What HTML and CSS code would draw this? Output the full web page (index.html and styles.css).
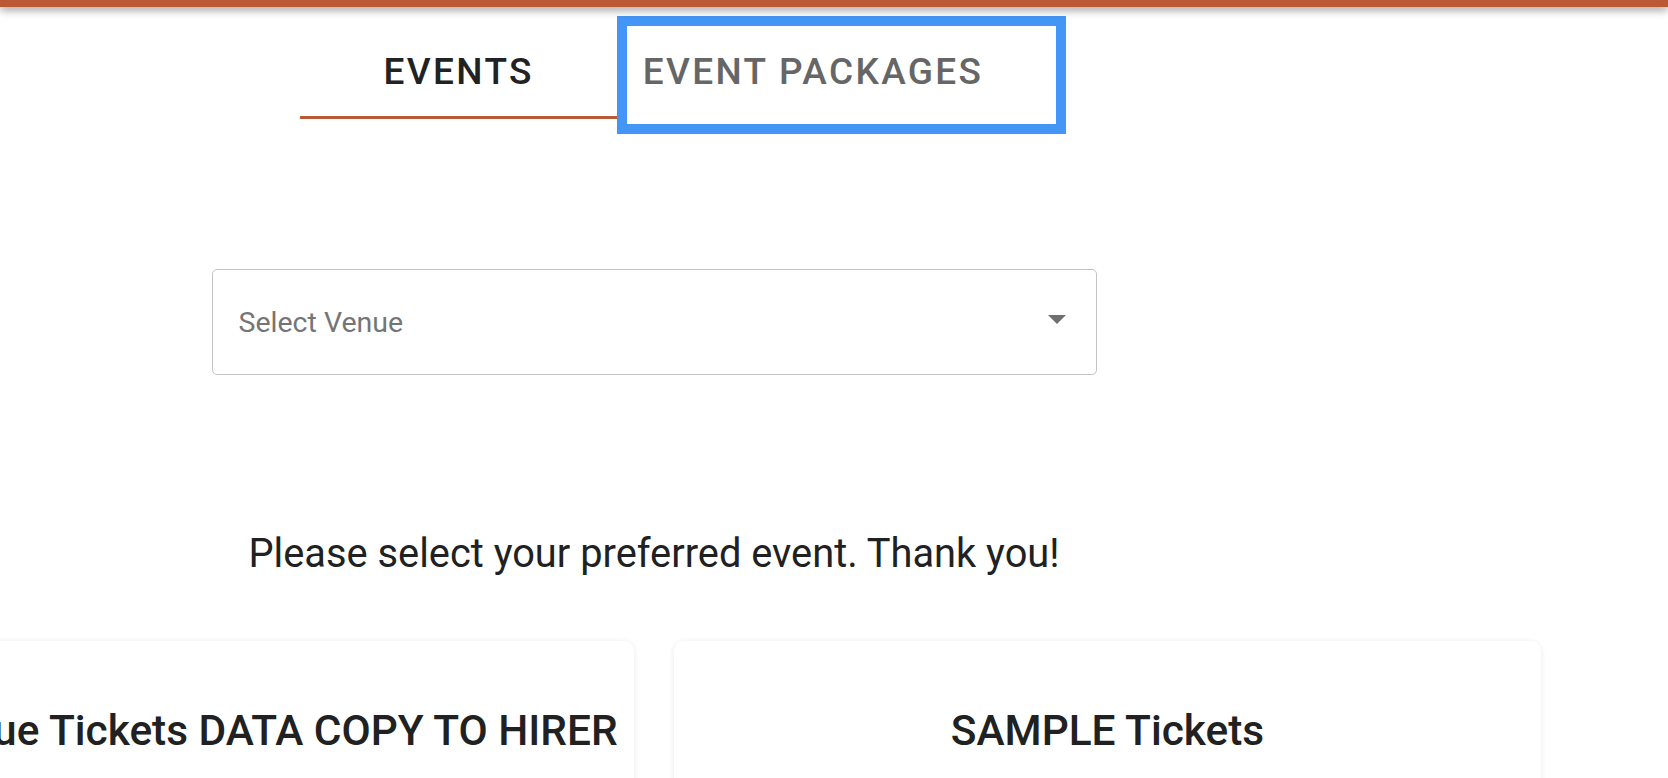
FILE: index.html
```html
<!DOCTYPE html>
<html lang="en">
<head>
<meta charset="utf-8">
<title>Events</title>
<link rel="stylesheet" href="styles.css">
</head>
<body>
  <header class="topbar"></header>
  <main class="main">
    <nav class="tabs">
      <div class="tab tab-active">EVENTS</div>
      <div class="tab">EVENT PACKAGES</div>
    </nav>
    <div class="focus-ring"></div>

    <div class="select">
      <span class="select-label">Select Venue</span>
      <span class="select-arrow"></span>
    </div>

    <p class="prompt">Please select your preferred event. Thank you!</p>

    <div class="cards">
      <div class="card"><h2 class="card-title">Events Venue Tickets DATA COPY TO HIRER</h2></div>
      <div class="card"><h2 class="card-title">SAMPLE Tickets</h2></div>
    </div>
  </main>
</body>
</html>
```

FILE: styles.css
```css
html, body {
  margin: 0;
  padding: 0;
  overflow: hidden;
  background: #ffffff;
}

body {
  font-family: Roboto, "Liberation Sans", Arial, sans-serif;
  color: #212121;
  width: 1668px;
  height: 778px;
}

.topbar {
  position: relative;
  z-index: 2;
  height: 7px;
  background: #b95a35;
  box-shadow: 0 3px 8px rgba(0, 0, 0, 0.42);
}

.main {
  position: relative;
  width: 1308px;
  display: flex;
  flex-direction: column;
  align-items: center;
}

.tabs {
  display: flex;
  margin-top: 17px;
}

.tab {
  min-width: 318px;
  box-sizing: border-box;
  padding: 0 25px;
  height: 95px;
  line-height: 96px;
  text-align: center;
  font-size: 37px;
  font-weight: 500;
  letter-spacing: 2.35px;
  color: #666666;
  border-bottom: 3px solid transparent;
}

.tab-active {
  color: #222222;
  border-bottom-color: #b95a35;
}

.focus-ring {
  position: absolute;
  left: 617px;
  top: 9px;
  width: 449px;
  height: 118px;
  box-sizing: border-box;
  border: 10px solid #4496f6;
}

.select {
  margin-top: 150px;
  width: 885px;
  height: 106px;
  box-sizing: border-box;
  border: 1px solid #c4c4c4;
  border-radius: 5px;
  display: flex;
  align-items: center;
  justify-content: space-between;
  padding: 0 30px 0 26px;
}

.select-label {
  font-size: 28.5px;
  color: #757575;
}

.select-arrow {
  width: 0;
  height: 0;
  border-left: 9px solid transparent;
  border-right: 9px solid transparent;
  border-top: 9px solid #6f6f6f;
  margin-bottom: 6px;
}

.prompt {
  margin: 155px 0 0;
  font-size: 39.8px;
  line-height: 48px;
  color: #212121;
  white-space: nowrap;
}

.cards {
  margin-top: 63px;
  display: flex;
  justify-content: center;
  gap: 40px;
  width: 100%;
}

.card {
  flex: 0 0 867px;
  min-height: 300px;
  background: #ffffff;
  border-radius: 10px;
  box-shadow: 0 1px 6px rgba(0, 0, 0, 0.09);
  display: flex;
  justify-content: center;
  padding-top: 65px;
  box-sizing: border-box;
}

.card-title {
  margin: 0;
  font-size: 42.4px;
  line-height: 50px;
  font-weight: 500;
  color: #212121;
  white-space: nowrap;
}
```
